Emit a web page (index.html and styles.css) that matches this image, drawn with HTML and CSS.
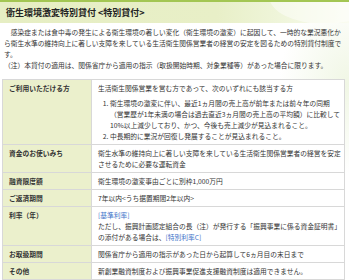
FILE: index.html
```html
<!DOCTYPE html>
<html lang="ja">
<head>
<meta charset="utf-8">
<title>衛生環境激変特別貸付</title>
<link rel="stylesheet" href="styles.css">
</head>
<body>
<div class="page">
  <div class="head">
    <h1 class="title">衛生環境激変特別貸付 &lt;特別貸付&gt;</h1>
  </div>
  <div class="intro">
    <p class="lead">感染症または食中毒の発生による衛生環境の著しい変化（衛生環境の激変）に起因して、一時的な業況悪化か<br>ら衛生水準の維持向上に著しい支障を来している生活衛生関係営業者の経営の安定を図るための特別貸付制度で<br>す。</p>
    <p class="note">（注）本貸付の適用は、関係省庁から適用の指示（取扱開始時期、対象業種等）があった場合に限ります。</p>
  </div>
  <table class="spec">
    <colgroup><col class="c-label"><col class="c-value"></colgroup>
    <tr>
      <th>ご利用いただける方</th>
      <td>生活衛生関係営業を営む方であって、次のいずれにも該当する方
        <ol class="cond">
          <li>衛生環境の激変に伴い、最近1ヵ月間の売上高が前年または前々年の同期<br>（営業歴が1年未満の場合は過去直近3ヵ月間の売上高の平均額）に比較して<br>10%以上減少しており、かつ、今後も売上減少が見込まれること。</li>
          <li>中長期的に業況が回復し発展することが見込まれること。</li>
        </ol>
      </td>
    </tr>
    <tr>
      <th>資金のお使いみち</th>
      <td>衛生水準の維持向上に著しい支障を来している生活衛生関係営業者の経営を安定させるために必要な運転資金</td>
    </tr>
    <tr>
      <th>融資限度額</th>
      <td>衛生環境の激変事由ごとに別枠1,000万円</td>
    </tr>
    <tr>
      <th>ご返済期間</th>
      <td>7年以内&lt;うち据置期間2年以内&gt;</td>
    </tr>
    <tr>
      <th>利率（年）</th>
      <td><a class="lnk" href="#">[基準利率]</a><br>ただし、振興計画認定組合の長（注）が発行する「振興事業に係る資金証明書」の添付がある場合は、<a class="lnk" href="#">[特別利率C]</a></td>
    </tr>
    <tr>
      <th>お取扱期間</th>
      <td>関係省庁から適用の指示があった日から起算して6ヵ月目の末日まで</td>
    </tr>
    <tr>
      <th>その他</th>
      <td>新創業融資制度および振興事業促進支援融資制度は適用できません。</td>
    </tr>
  </table>
</div>
</body>
</html>
```

FILE: styles.css
```css
html, body {
  margin: 0;
  padding: 0;
}

body {
  width: 349px;
  height: 280px;
  overflow: hidden;
  font-family: "Noto Sans CJK JP", "Noto Sans", sans-serif;
  font-size: 6.75px;
  color: #333;
  background:
    radial-gradient(ellipse 70px 90px at 100% 30%, rgba(222, 236, 196, 0.45), rgba(255, 255, 255, 0) 100%),
    #fff;
}

.page {
  display: flex;
  flex-direction: column;
}

.head {
  position: relative;
  overflow: hidden;
  height: 21px;
  border-top: 2px solid #a3c653;
  display: flex;
  align-items: center;
  padding-left: 6px;
  background: linear-gradient(90deg, #e6eec3 0%, #e8efc7 62%, #eff5da 80%, #fafcf1 100%);
}

.head::after {
  content: "";
  position: absolute;
  right: -30px;
  top: -34px;
  width: 110px;
  height: 56px;
  border-radius: 50%;
  background: rgba(255, 255, 255, 0.45);
}

.title {
  margin: 0;
  font-size: 9px;
  font-weight: 700;
  color: #222;
  line-height: 1;
  position: relative;
  z-index: 1;
}

.intro {
  padding: 4px 2px 0 4px;
  line-height: 11px;
}

.intro p {
  margin: 0;
  white-space: nowrap;
}

.lead {
  text-indent: 1em;
}

.spec {
  margin: 8px 0 0 2px;
  width: 343px;
  border-collapse: collapse;
  table-layout: fixed;
  line-height: 11px;
}

.c-label {
  width: 89px;
}

.spec th,
.spec td {
  border: 1px solid #d8d8d8;
  vertical-align: top;
  padding: 3px 2px 2px 6px;
}

.spec th {
  background: #ebf0cc;
  text-align: left;
  font-weight: 700;
  color: #333;
}

.spec td {
  background: #fff;
}

.cond {
  margin: 4px 0 0 0;
  padding-left: 12px;
}

.cond li {
  white-space: nowrap;
}

.lnk {
  color: #3f74c9;
  text-decoration: none;
}
```
